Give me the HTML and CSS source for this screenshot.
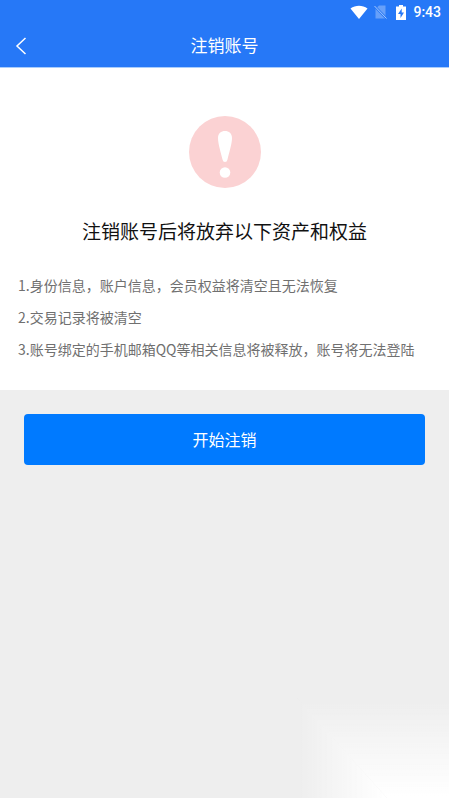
FILE: index.html
```
<!DOCTYPE html>
<html lang="zh-CN">
<head>
<meta charset="utf-8">
<meta name="viewport" content="width=device-width, initial-scale=1">
<title>注销账号</title>
<link rel="stylesheet" href="styles.css">
</head>
<body>
<header class="top">
  <div class="status">
    <svg width="18" height="14" viewBox="0 0 18 14" aria-hidden="true"><path d="M0.5 3.6C5.5-.2 12.500-.2 17.500 3.600L9 14Z" fill="#fff"/></svg>
    <svg class="sim" width="13" height="14" viewBox="0 0 13 14" aria-hidden="true"><path d="M5 .5H11.500V13.500H1.500V4Z" fill="#fff" opacity=".3"/><path d="M.5 1 12.500 13.500" stroke="#2678f7" stroke-width="2.400"/><path d="M.5 1 12.500 13.500" stroke="#fff" stroke-width="1" opacity=".6"/></svg>
    <svg class="battery" width="10" height="15" viewBox="0 0 10 15" aria-hidden="true"><path d="M3 0H7V1.500H10V15H0V1.500H3Z" fill="#fff"/><path d="M5.700 3.500 2 9H4.500V13L8 7.500H5.700Z" fill="#2678f7"/></svg>
    <time class="clock">9:43</time>
  </div>
  <nav class="bar">
    <button class="back" type="button" aria-label="返回"><svg width="12" height="18" viewBox="0 0 12 18" aria-hidden="true"><path d="M10.500 1 2 9 10.500 17" fill="none" stroke="#fff" stroke-width="1.500"/></svg></button>
    <h1 class="title">注销账号</h1>
  </nav>
</header>
<main class="page">
  <section class="notice">
    <svg class="warning" width="72" height="72" viewBox="0 0 72 72" aria-hidden="true"><circle cx="36" cy="36" r="36" fill="#fbd2d3"/><path d="M29 22C29 17.500 32 15 36 15S43 17.500 43 22C43 28 40 37 38.500 43.500Q38 46 36 46T33.500 43.500C32 37 29 28 29 22Z" fill="#fff"/><circle cx="36" cy="56.500" r="5.300" fill="#fff"/></svg>
    <h2 class="heading">注销账号后将放弃以下资产和权益</h2>
    <div class="terms">
      <p>1.身份信息，账户信息，会员权益将清空且无法恢复</p>
      <p>2.交易记录将被清空</p>
      <p>3.账号绑定的手机邮箱QQ等相关信息将被释放，账号将无法登陆</p>
    </div>
  </section>
  <div class="action"><button class="submit" type="button">开始注销</button></div>
</main>
<div class="glow"></div>
</body>
</html>
```
FILE: styles.css
```
* {
  box-sizing: border-box;
}

body {
  margin: 0;
  min-height: 100vh;
  background: #eee;
  font-family: "Noto Sans CJK SC", sans-serif;
}

h1, h2, p {
  margin: 0;
  font-weight: 400;
}

button {
  border: 0;
  padding: 0;
  font: inherit;
  cursor: pointer;
}

svg {
  display: block;
}

.top {
  background: #2678f7;
  color: #fff;
  border-bottom: 1px solid #a9cdfc;
}

.status {
  display: flex;
  justify-content: flex-end;
  align-items: center;
  height: 24px;
  padding-right: 8px;
}

.sim {
  margin-left: 6px;
}

.battery {
  margin-left: 9px;
}

.clock {
  margin-left: 7px;
  font: 500 14px/24px Roboto, sans-serif;
}

.bar {
  display: grid;
  grid-template-columns: 44px 1fr 44px;
  height: 43px;
}

.back {
  display: flex;
  align-items: center;
  padding-left: 15px;
  background: none;
}

.title {
  font-size: 17px;
  line-height: 41px;
  text-align: center;
}

.notice {
  padding: 48px 18px 25px;
  background: #fff;
}

.warning {
  margin: 0 auto;
}

.heading {
  margin-top: 27px;
  color: #111;
  font-size: 19px;
  line-height: 32px;
  text-align: center;
}

.terms {
  margin-top: 22px;
  color: #707070;
  font-size: 14px;
  line-height: 32px;
}

.action {
  padding: 24px;
}

.submit {
  display: block;
  width: 100%;
  height: 51px;
  border-radius: 4px;
  background: #007aff;
  color: #fff;
  font-size: 16px;
  line-height: 49px;
}

/* Soft light in the bottom right corner, fading out to the left and upwards */
.glow {
  position: fixed;
  right: 0;
  bottom: 0;
  width: 152px;
  height: 100px;
  pointer-events: none;
}

.glow::before,
.glow::after {
  content: "";
  position: absolute;
  inset: 0;
}

.glow::before {
  background: linear-gradient(to right, transparent, #fff 90px);
  clip-path: polygon(0 0, 90px 100%, 0 100%);
}

.glow::after {
  background: linear-gradient(to bottom, transparent, #fff);
  clip-path: polygon(0 0, 100% 0, 100% 100%, 90px 100%);
}
```
